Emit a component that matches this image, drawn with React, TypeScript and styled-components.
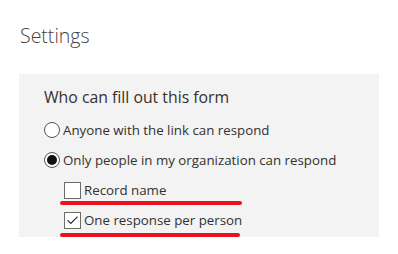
import React from "react";
import styled, { createGlobalStyle } from "styled-components";

const GlobalStyle = createGlobalStyle`
  html, body {
    margin: 0;
    padding: 0;
    background: #ffffff;
  }
  body {
    font-family: "Open Sans", "Noto Sans", "Liberation Sans", sans-serif;
    color: #323130;
  }
`;

const Page = styled.div`
  width: 398px;
  height: 254px;
  padding: 24px 0 0 19px;
  box-sizing: border-box;
`;

const Title = styled.h1`
  margin: 0 0 26px 1px;
  font-size: 19.5px;
  line-height: 24px;
  font-weight: 300;
  color: #444444;
`;

const Panel = styled.section`
  width: 360px;
  height: 163px;
  box-sizing: border-box;
  padding: 12px 0 0 25px;
  background: #f3f3f3;
`;

const Heading = styled.h2`
  margin: 0 0 7px;
  font-size: 15.8px;
  line-height: 22px;
  font-weight: 400;
  color: #323130;
`;

const OptionList = styled.div`
  display: flex;
  flex-direction: column;
`;

const OptionRow = styled.label<{ $indent?: boolean; $mark?: number; $markOffset?: number }>`
  position: relative;
  display: flex;
  align-items: center;
  gap: 3px;
  height: 30px;
  padding-left: ${(p) => (p.$indent ? "20px" : "0")};
  font-size: 13.3px;
  color: #323130;

  &::after {
    content: "";
    display: ${(p) => (p.$mark ? "block" : "none")};
    position: absolute;
    left: 16px;
    bottom: ${(p) => p.$markOffset ?? 0}px;
    width: ${(p) => p.$mark ?? 0}px;
    height: 4px;
    border-radius: 2px;
    background: #e8131f;
  }
`;

const RadioCircle = styled.span<{ $checked?: boolean }>`
  position: relative;
  width: 16px;
  height: 16px;
  box-sizing: border-box;
  border: 1px solid #555555;
  border-radius: 50%;
  background: #ffffff;
  flex-shrink: 0;

  &::after {
    content: "";
    display: ${(p) => (p.$checked ? "block" : "none")};
    position: absolute;
    left: 2px;
    top: 2px;
    width: 10px;
    height: 10px;
    border-radius: 50%;
    background: #111111;
  }
`;

const CheckBox = styled.span`
  display: flex;
  align-items: center;
  justify-content: center;
  width: 17px;
  height: 17px;
  box-sizing: border-box;
  border: 1.5px solid #6b6b6b;
  background: #ffffff;
  flex-shrink: 0;
`;

const CheckMark = () => (
  <svg width="13" height="10" viewBox="0 0 13 10" fill="none">
    <path d="M1.5 5.2 L4.8 8.4 L11.6 1.6" stroke="#1f2a44" strokeWidth="1.1" />
  </svg>
);

const Radio = ({ label, checked }: { label: string; checked?: boolean }) => (
  <OptionRow>
    <RadioCircle $checked={checked} />
    <span>{label}</span>
  </OptionRow>
);

const Check = ({
  label,
  checked,
  mark,
  markOffset,
}: {
  label: string;
  checked?: boolean;
  mark: number;
  markOffset: number;
}) => (
  <OptionRow $indent $mark={mark} $markOffset={markOffset}>
    <CheckBox>{checked ? <CheckMark /> : null}</CheckBox>
    <span>{label}</span>
  </OptionRow>
);

export default function App() {
  return (
    <>
      <GlobalStyle />
      <Page>
        <Title>Settings</Title>
        <Panel>
          <Heading>Who can fill out this form</Heading>
          <OptionList>
            <Radio label="Anyone with the link can respond" />
            <Radio label="Only people in my organization can respond" checked />
            <Check label="Record name" mark={182} markOffset={0} />
            <Check label="One response per person" checked mark={180} markOffset={-2} />
          </OptionList>
        </Panel>
      </Page>
    </>
  );
}
